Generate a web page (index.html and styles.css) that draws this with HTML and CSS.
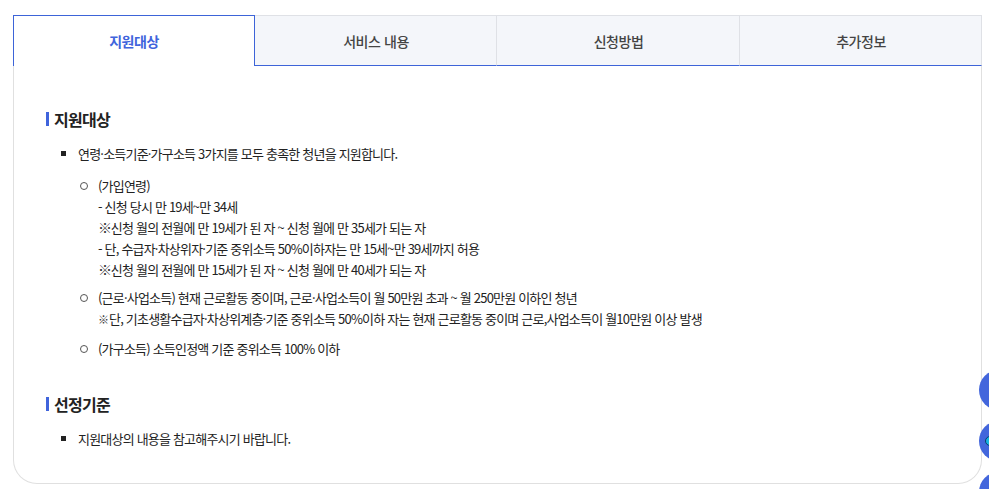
FILE: index.html
```html
<!DOCTYPE html>
<html lang="ko">
<head>
<meta charset="utf-8">
<title>지원대상</title>
<link rel="stylesheet" href="styles.css">
</head>
<body>
<div class="card">
  <div class="tabs">
    <div class="tab active">지원대상</div>
    <div class="tab">서비스 내용</div>
    <div class="tab">신청방법</div>
    <div class="tab">추가정보</div>
  </div>
  <div class="panel">
    <h3 class="heading">지원대상</h3>
    <ul class="square first">
      <li>연령·소득기준·가구소득 3가지를 모두 충족한 청년을 지원합니다.</li>
    </ul>
    <ul class="circle">
      <li>(가입연령)<br>- 신청 당시 만 19세~만 34세<br><span class="mark big">※</span> 신청 월의 전월에 만 19세가 된 자 ~ 신청 월에 만 35세가 되는 자<br>- 단, 수급자·차상위자·기준 중위소득 50%이하자는 만 15세~만 39세까지 허용<br><span class="mark big">※</span> 신청 월의 전월에 만 15세가 된 자 ~ 신청 월에 만 40세가 되는 자</li>
      <li>(근로·사업소득) 현재 근로활동 중이며, 근로·사업소득이 월 50만원 초과 ~ 월 250만원 이하인 청년<br><span class="mark">※</span> 단, 기초생활수급자·차상위계층·기준 중위소득 50%이하 자는 현재 근로활동 중이며 근로,사업소득이 월10만원 이상 발생</li>
      <li>(가구소득) 소득인정액 기준 중위소득 100% 이하</li>
    </ul>
    <h3 class="heading second">선정기준</h3>
    <ul class="square">
      <li>지원대상의 내용을 참고해주시기 바랍니다.</li>
    </ul>
  </div>
</div>
<div class="floats">
  <div class="float"></div>
  <div class="float"><span class="dot"></span></div>
  <div class="float"></div>
</div>
</body>
</html>
```
FILE: styles.css
```css
* { box-sizing: border-box; }
html, body { margin: 0; padding: 0; height: 100%; overflow: hidden; background: #fff; }
body {
  font-family: "Noto Sans CJK KR", "Noto Sans", sans-serif;
  font-size: 13px;
  color: #222;
  letter-spacing: -0.8px;
  padding: 15px 7px 0 13px;
}
.card {
  height: 469px;
  border: 1px solid #e0e0e0;
  border-top: 0;
  border-radius: 0 0 24px 24px;
}
.tabs {
  display: grid;
  grid-template-columns: 242px 242px 243px 1fr;
  margin: 0 -1px;
  height: 51px;
}
.tab {
  display: flex;
  align-items: center;
  justify-content: center;
  padding-left: 1px;
  background: #f4f6fa;
  border-top: 1px solid #dfe1e6;
  border-right: 1px solid #dfe1e6;
  border-bottom: 1px solid #3d64d8;
  font-size: 14px;
  font-weight: 500;
  letter-spacing: -0.45px;
  color: #444;
}
.tab.active {
  padding-left: 0;
  background: #fff;
  border: 1px solid #3d64d8;
  border-bottom: 0;
  color: #4064dc;
  font-weight: 700;
}
.panel { padding: 46px 32px 0; }
.heading {
  margin: 0;
  padding-left: 5px;
  font-size: 16px;
  font-weight: 700;
  line-height: 14px;
  height: 14px;
  letter-spacing: -0.7px;
  color: #222;
  border-left: 3px solid #4064dc;
  display: flex;
  align-items: center;
}
.heading.second { margin-top: 38px; }
ul { list-style: none; margin: 0; padding: 0; line-height: 21px; }
.square { margin-top: 17px; padding-left: 32px; }
.square li { position: relative; }
.square li::before {
  content: "";
  position: absolute;
  left: -17px;
  top: 8px;
  width: 5px;
  height: 5px;
  background: #222;
}
.circle { margin-top: 11px; padding-left: 52px; }
.circle li { position: relative; margin-bottom: 7px; }
.circle li:nth-child(2) { margin-bottom: 9px; }
.circle li::before {
  content: "";
  position: absolute;
  left: -18px;
  top: 7px;
  width: 6px;
  height: 6px;
  border: 1.5px solid #555;
  border-radius: 50%;
}
.mark { font-size: 11px; line-height: 0; letter-spacing: -2.8px; color: #333; }
.mark.big { font-size: 14px; letter-spacing: -4px; }
.floats {
  position: fixed;
  left: 979px;
  top: 370px;
  display: flex;
  flex-direction: column;
  gap: 11px;
}
.float {
  width: 40px;
  height: 40px;
  border-radius: 50%;
  background: #4366dc;
  position: relative;
}
.dot {
  position: absolute;
  left: 6px;
  top: 15px;
  width: 10px;
  height: 10px;
  border-radius: 50%;
  background: #19b5e0;
  border: 1px solid #0b3a6e;
}
```
